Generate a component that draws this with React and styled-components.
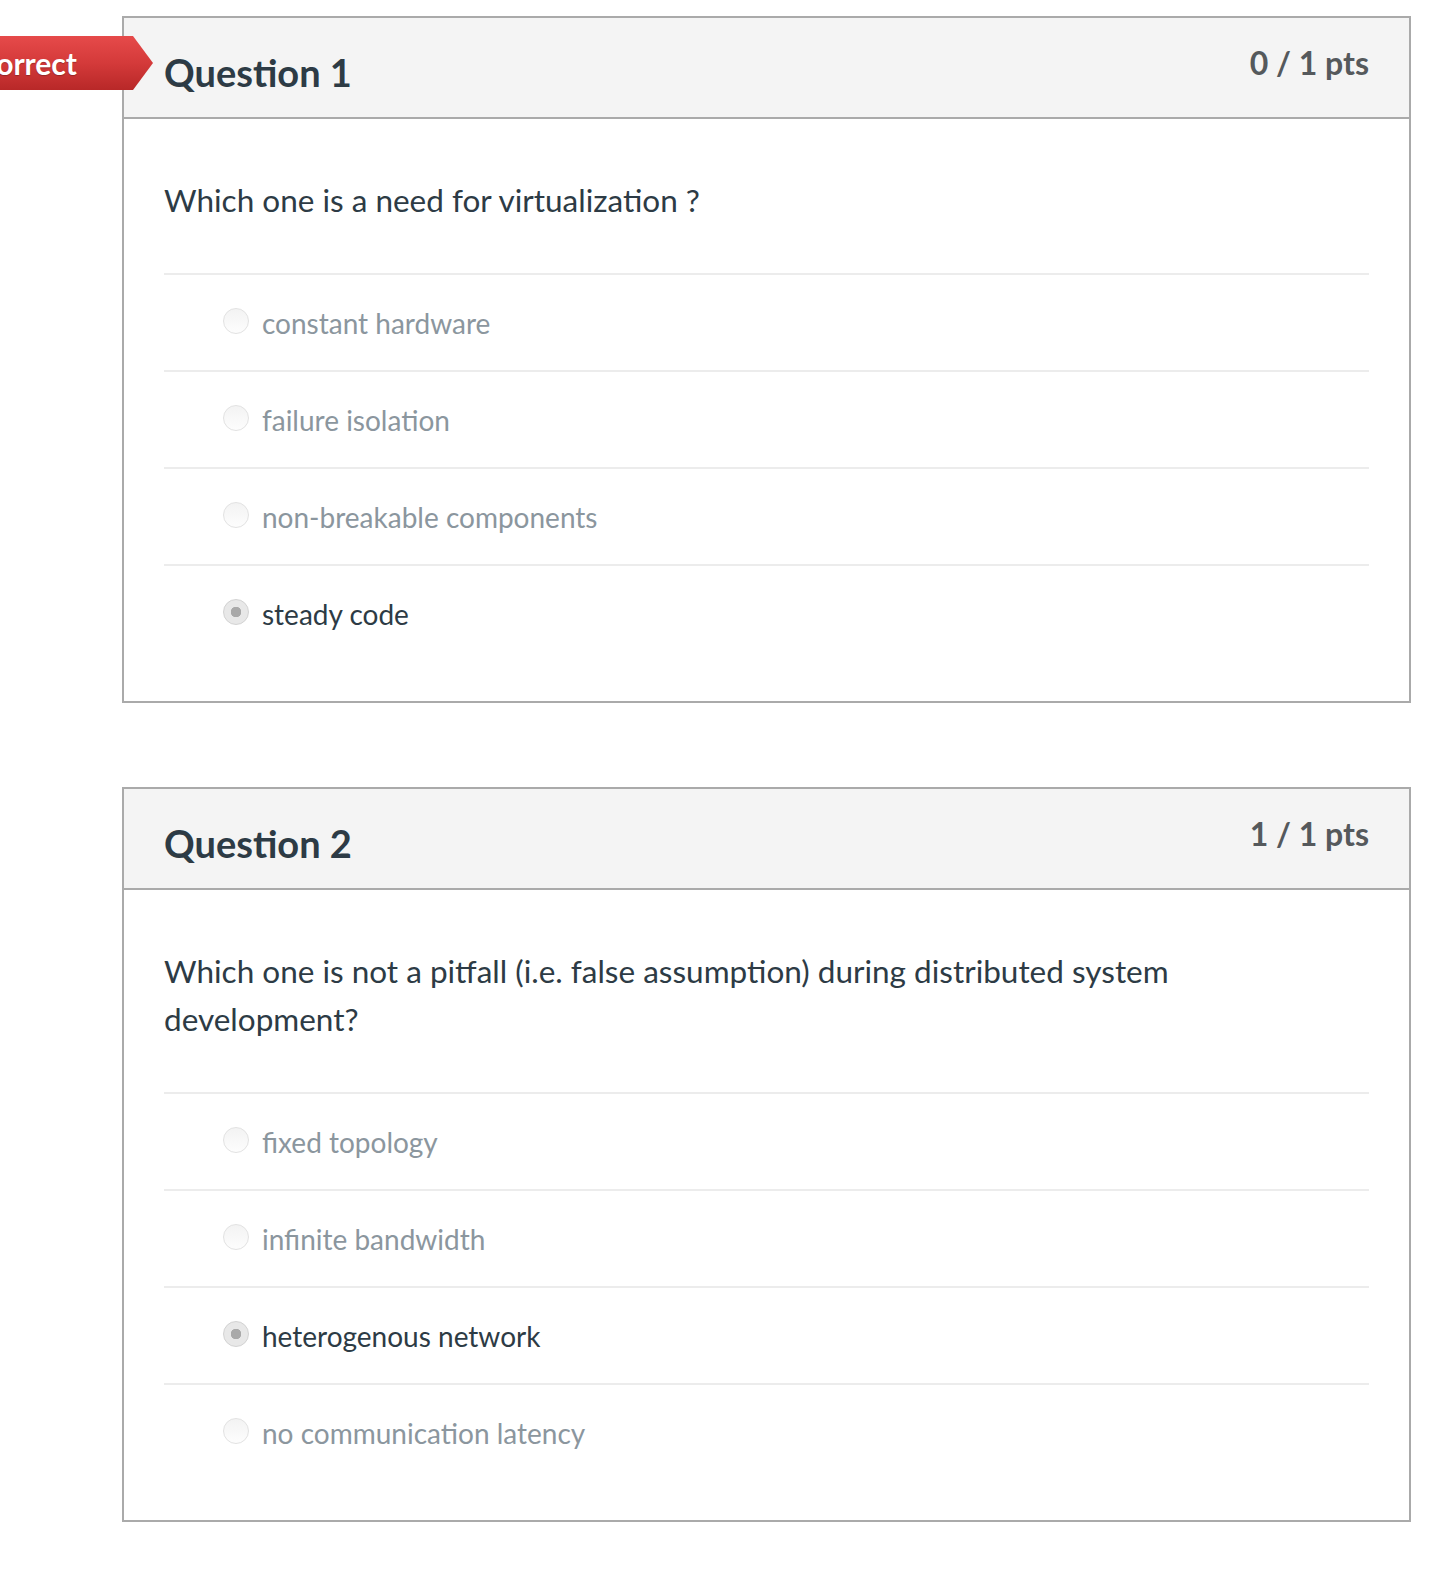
import React from "react";
import styled, { createGlobalStyle } from "styled-components";

const GlobalStyle = createGlobalStyle`
  html, body {
    margin: 0;
    padding: 0;
    background: #fff;
    overflow-x: hidden;
  }
  body {
    font-family: Lato, "Open Sans", "Liberation Sans", sans-serif;
  }
`;

const Page = styled.div`
  display: flex;
  flex-direction: column;
  gap: 84px;
  padding: 16px 0 40px 122px;
`;

const Card = styled.div`
  position: relative;
  width: 1289px;
  box-sizing: border-box;
  border: 2px solid #aaaaaa;
  background: #fff;
`;

const Banner = styled.div`
  position: absolute;
  top: 18px;
  right: calc(100% - 29px);
  height: 54px;
  display: flex;
  align-items: center;
  padding: 0 76px 0 30px;
  white-space: nowrap;
  font-size: 30px;
  font-weight: 700;
  color: #fff;
  text-shadow: 0 1px 1px rgba(0, 0, 0, 0.25);
  background: linear-gradient(to bottom, #e64a4a 0%, #d43a3a 50%, #b82828 100%);
  clip-path: polygon(0 0, calc(100% - 20px) 0, 100% 50%, calc(100% - 20px) 100%, 0 100%);
  z-index: 2;
`;

const Header = styled.div`
  display: flex;
  justify-content: space-between;
  align-items: flex-start;
  height: 101px;
  box-sizing: border-box;
  padding: 25px 40px 0 40px;
  background: #f4f4f4;
  border-bottom: 2px solid #aaaaaa;
`;

const Title = styled.h2`
  margin: 7px 0 0;
  font-size: 38px;
  line-height: 1.2;
  font-weight: 700;
  color: #2d3b45;
`;

const Points = styled.div`
  margin-top: 1px;
  font-size: 32px;
  line-height: 1.2;
  font-weight: 700;
  color: #55595c;
`;

const Body = styled.div`
  padding: 57px 40px 40px;
`;

const QuestionText = styled.p`
  margin: 0 0 49px;
  font-size: 31.5px;
  line-height: 48px;
  color: #2d3b45;
  max-width: 1060px;
`;

const AnswerRow = styled.div`
  display: flex;
  align-items: center;
  gap: 13px;
  height: 97px;
  box-sizing: border-box;
  padding-left: 59px;
  border-top: 2px solid #ececec;
  font-size: 28px;
  color: ${(p) => (p.$selected ? "#2d3b45" : "#8b969e")};
`;

const Radio = styled.span`
  width: 26px;
  height: 26px;
  flex: none;
  box-sizing: border-box;
  border-radius: 50%;
  margin-top: -4px;
  border: 1px solid ${(p) => (p.$selected ? "#d2d2d2" : "#e2e2e2")};
  background: ${(p) =>
    p.$selected
      ? "radial-gradient(circle, #a9a9a9 0 5px, #e8e8e8 5.5px)"
      : "linear-gradient(to bottom, #f3f3f3, #fdfdfd)"};
`;

const questions = [
  {
    title: "Question 1",
    pts: "0 / 1 pts",
    incorrect: true,
    text: "Which one is a need for virtualization ?",
    answers: ["constant hardware", "failure isolation", "non-breakable components", "steady code"],
    picked: 3,
  },
  {
    title: "Question 2",
    pts: "1 / 1 pts",
    text: "Which one is not a pitfall (i.e. false assumption) during distributed system development?",
    answers: ["fixed topology", "infinite bandwidth", "heterogenous network", "no communication latency"],
    picked: 2,
  },
];

export default function App() {
  return (
    <>
      <GlobalStyle />
      <Page>
        {questions.map((q) => (
          <Card key={q.title}>
            {q.incorrect && <Banner>Incorrect</Banner>}
            <Header>
              <Title>{q.title}</Title>
              <Points>{q.pts}</Points>
            </Header>
            <Body>
              <QuestionText>{q.text}</QuestionText>
              {q.answers.map((a, i) => (
                <AnswerRow key={a} $selected={i === q.picked}>
                  <Radio $selected={i === q.picked} />
                  {a}
                </AnswerRow>
              ))}
            </Body>
          </Card>
        ))}
      </Page>
    </>
  );
}
